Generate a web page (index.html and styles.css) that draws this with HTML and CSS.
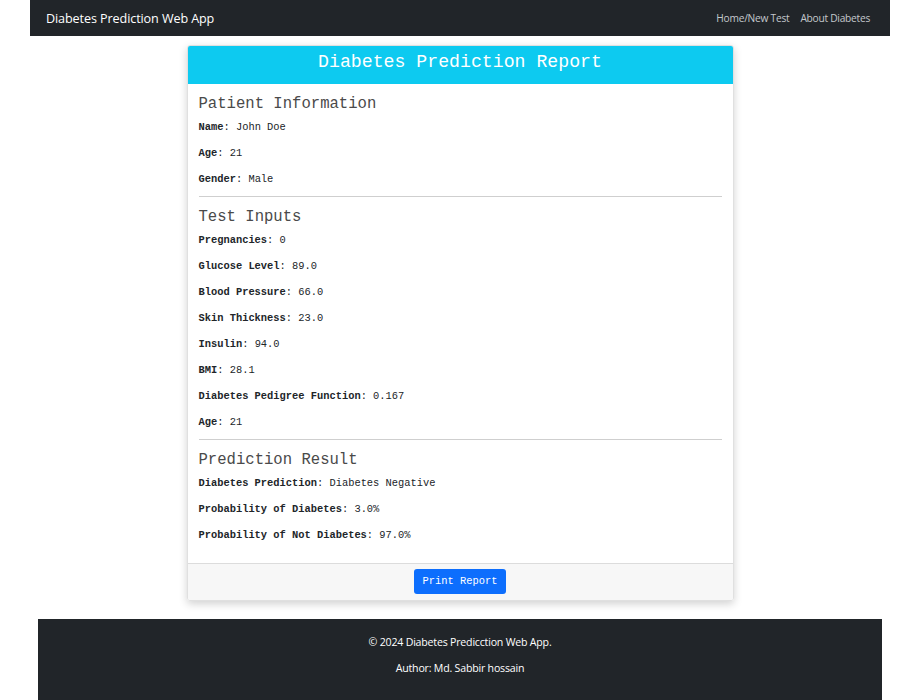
FILE: index.html
```html
<!DOCTYPE html>
<html>
<head>
<meta charset="utf-8">
<link rel="stylesheet" href="styles.css">
</head>
<body>
<nav class="navbar">
  <span class="brand">Diabetes Prediction Web App</span>
  <div class="nav-links">
    <a class="nav-link">Home/New Test</a>
    <a class="nav-link">About Diabetes</a>
  </div>
</nav>
<main class="main">
  <div class="card">
    <div class="card-header">Diabetes Prediction Report</div>
    <div class="card-body">
      <h4 class="section-title">Patient Information</h4>
      <p class="row"><b>Name</b>: John Doe</p>
      <p class="row"><b>Age</b>: 21</p>
      <p class="row"><b>Gender</b>: Male</p>
      <hr class="divider">
      <h4 class="section-title">Test Inputs</h4>
      <p class="row"><b>Pregnancies</b>: 0</p>
      <p class="row"><b>Glucose Level</b>: 89.0</p>
      <p class="row"><b>Blood Pressure</b>: 66.0</p>
      <p class="row"><b>Skin Thickness</b>: 23.0</p>
      <p class="row"><b>Insulin</b>: 94.0</p>
      <p class="row"><b>BMI</b>: 28.1</p>
      <p class="row"><b>Diabetes Pedigree Function</b>: 0.167</p>
      <p class="row"><b>Age</b>: 21</p>
      <hr class="divider">
      <h4 class="section-title">Prediction Result</h4>
      <p class="row"><b>Diabetes Prediction</b>: Diabetes Negative</p>
      <p class="row"><b>Probability of Diabetes</b>: 3.0%</p>
      <p class="row"><b>Probability of Not Diabetes</b>: 97.0%</p>
    </div>
    <div class="card-footer">
      <button class="btn">Print Report</button>
    </div>
  </div>
</main>
<footer class="footer">
  <p class="footer-line">© 2024 Diabetes Predicction Web App.</p>
  <p class="footer-line">Author: Md. Sabbir hossain</p>
</footer>
</body>
</html>
```
FILE: styles.css
```css
html, body {
  margin: 0;
  padding: 0;
  background: #ffffff;
}
body {
  font-family: "Open Sans", "Noto Sans", sans-serif;
  width: 922px;
  height: 700px;
  overflow: hidden;
}
.navbar {
  margin: 0 32px 0 30px;
  height: 36px;
  background: #212529;
  display: flex;
  align-items: center;
  justify-content: space-between;
  padding: 0 20px 0 16px;
}
.brand {
  color: #ffffff;
  font-size: 12.6px;
  letter-spacing: -0.1px;
}
.nav-links {
  display: flex;
  gap: 11px;
}
.nav-link {
  color: #c4c8cc;
  font-size: 10.2px;
  letter-spacing: -0.25px;
}
.main {
  display: flex;
  justify-content: center;
  padding: 9px 0 18px 0;
}
.card {
  width: 545px;
  margin-left: -2px;
  border: 1px solid #e0e0e0;
  border-radius: 3px;
  box-shadow: 0 3px 8px rgba(0,0,0,0.18);
  font-family: "Liberation Mono", "Courier New", monospace;
  overflow: hidden;
}
.card-header {
  background: #0dcaf0;
  color: #ffffff;
  height: 38px;
  line-height: 32px;
  text-align: center;
  font-size: 18.2px;
}
.card-body {
  padding: 10px 11px 15px 11px;
  color: #212529;
}
.section-title {
  margin: 0;
  font-weight: normal;
  font-size: 15.6px;
  line-height: 20px;
  color: #4a4a4a;
}
.row {
  margin: 0;
  font-size: 10.4px;
  line-height: 26px;
  height: 26px;
}
.row b {
  font-weight: bold;
}
.divider {
  border: none;
  border-top: 1px solid #cfcfcf;
  margin: 4px 0 10px 0;
}
.card-footer {
  background: #f7f7f7;
  border-top: 1px solid #dcdcdc;
  height: 36px;
  display: flex;
  justify-content: center;
  align-items: center;
}
.btn {
  background: #0d6efd;
  color: #ffffff;
  border: none;
  border-radius: 3px;
  width: 92px;
  height: 25px;
  font-family: "Liberation Mono", "Courier New", monospace;
  font-size: 10.4px;
  padding: 0;
  margin-top: -2px;
}
.footer {
  margin: 0 40px 0 38px;
  background: #212529;
  height: 81px;
  display: flex;
  flex-direction: column;
  align-items: center;
  padding-top: 13px;
  box-sizing: border-box;
}
.footer-line {
  margin: 0;
  color: #ffffff;
  font-size: 10.6px;
  line-height: 20px;
  height: 26px;
  letter-spacing: -0.2px;
}
```
